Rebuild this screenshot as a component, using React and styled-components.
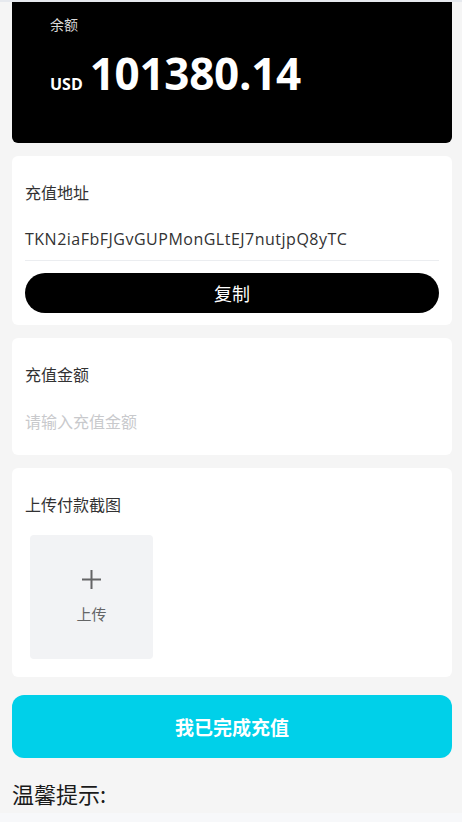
import React from "react";
import styled, { createGlobalStyle } from "styled-components";

const Global = createGlobalStyle`
  html, body {
    margin: 0;
    padding: 0;
    background: #f5f5f5;
  }
  body {
    font-family: "Open Sans", "Noto Sans CJK SC", sans-serif;
    color: #323233;
  }
`;

const Page = styled.div`
  border-top: 2px solid #e6e9ee;
  padding: 0 10px 0 12px;
`;

const Balance = styled.div`
  height: 141px;
  box-sizing: border-box;
  background: #000;
  border-radius: 0 0 6px 6px;
  padding: 13px 38px 0;
  color: #fff;
`;

const BalanceLabel = styled.div`
  font-size: 14px;
  line-height: 20px;
  color: #d8d8d8;
`;

const AmountRow = styled.div`
  display: flex;
  align-items: baseline;
  gap: 7px;
  margin-top: 8px;
`;

const Currency = styled.span`
  font-size: 16px;
  font-weight: 700;
`;

const Amount = styled.span`
  font-size: 44px;
  font-weight: 700;
  line-height: 60px;
  letter-spacing: -0.3px;
`;

const Card = styled.div`
  background: #fff;
  border-radius: 6px;
  margin-top: 13px;
  padding: 23px 13px ${(p) => p.$bottom || 12}px;
`;

const Label = styled.div`
  font-family: "Noto Sans CJK SC", sans-serif;
  font-size: 16px;
  line-height: 26px;
  color: #323233;
`;

const Address = styled.div`
  padding: 21px 0 8px;
  font-size: 16px;
  line-height: 26px;
  letter-spacing: 0.5px;
  color: #323233;
  border-bottom: 1px solid #ebedf0;
`;

const CopyButton = styled.button`
  display: block;
  width: 100%;
  height: 40px;
  margin-top: 12px;
  border: none;
  border-radius: 20px;
  background: #000;
  color: #fff;
  font-family: "Noto Sans CJK SC", sans-serif;
  font-size: 18px;
  cursor: pointer;
`;

const AmountInput = styled.input`
  display: block;
  width: 100%;
  box-sizing: border-box;
  margin-top: 21px;
  padding: 0;
  border: none;
  outline: none;
  background: transparent;
  font-family: "Noto Sans CJK SC", sans-serif;
  font-size: 16px;
  line-height: 26px;
  height: 26px;
  color: #323233;
  &::placeholder {
    color: #c8c9cc;
  }
`;

const Uploader = styled.div`
  width: 123px;
  height: 124px;
  margin: 18px 0 0 5px;
  background: #f2f3f5;
  border-radius: 4px;
  display: flex;
  flex-direction: column;
  align-items: center;
  justify-content: center;
  gap: 15px;
  color: #646566;
`;

const UploadText = styled.span`
  font-size: 15px;
  line-height: 20px;
  font-family: "Noto Sans CJK SC", sans-serif;
`;

const SubmitButton = styled.button`
  display: block;
  width: 100%;
  height: 63px;
  margin-top: 18px;
  border: none;
  border-radius: 12px;
  background: #00d0e9;
  color: #fff;
  font-family: "Noto Sans CJK SC", sans-serif;
  font-size: 19px;
  font-weight: 700;
  cursor: pointer;
`;

const Tips = styled.div`
  margin-top: 20px;
  font-family: "Noto Sans CJK SC", sans-serif;
  font-size: 22px;
  line-height: 30px;
  color: #1a1a1a;
`;

const TipsBody = styled.div`
  margin-top: 5px;
  height: 40px;
  background: #f7f8fa;
`;

const Plus = () => (
  <svg width="19" height="19" viewBox="0 0 19 19">
    <path d="M9.5 0v19M0 9.5h19" stroke="#646566" strokeWidth="2" />
  </svg>
);

export default function App() {
  return (
    <>
      <Global />
      <Page>
        <Balance>
          <BalanceLabel>余额</BalanceLabel>
          <AmountRow>
            <Currency>USD</Currency>
            <Amount>101380.14</Amount>
          </AmountRow>
        </Balance>

        <Card>
          <Label>充值地址</Label>
          <Address>TKN2iaFbFJGvGUPMonGLtEJ7nutjpQ8yTC</Address>
          <CopyButton>复制</CopyButton>
        </Card>

        <Card $bottom={21}>
          <Label>充值金额</Label>
          <AmountInput placeholder="请输入充值金额" />
        </Card>

        <Card $bottom={18}>
          <Label>上传付款截图</Label>
          <Uploader>
            <Plus />
            <UploadText>上传</UploadText>
          </Uploader>
        </Card>

        <SubmitButton>我已完成充值</SubmitButton>
        <Tips>温馨提示:</Tips>
      </Page>
      <TipsBody />
    </>
  );
}
